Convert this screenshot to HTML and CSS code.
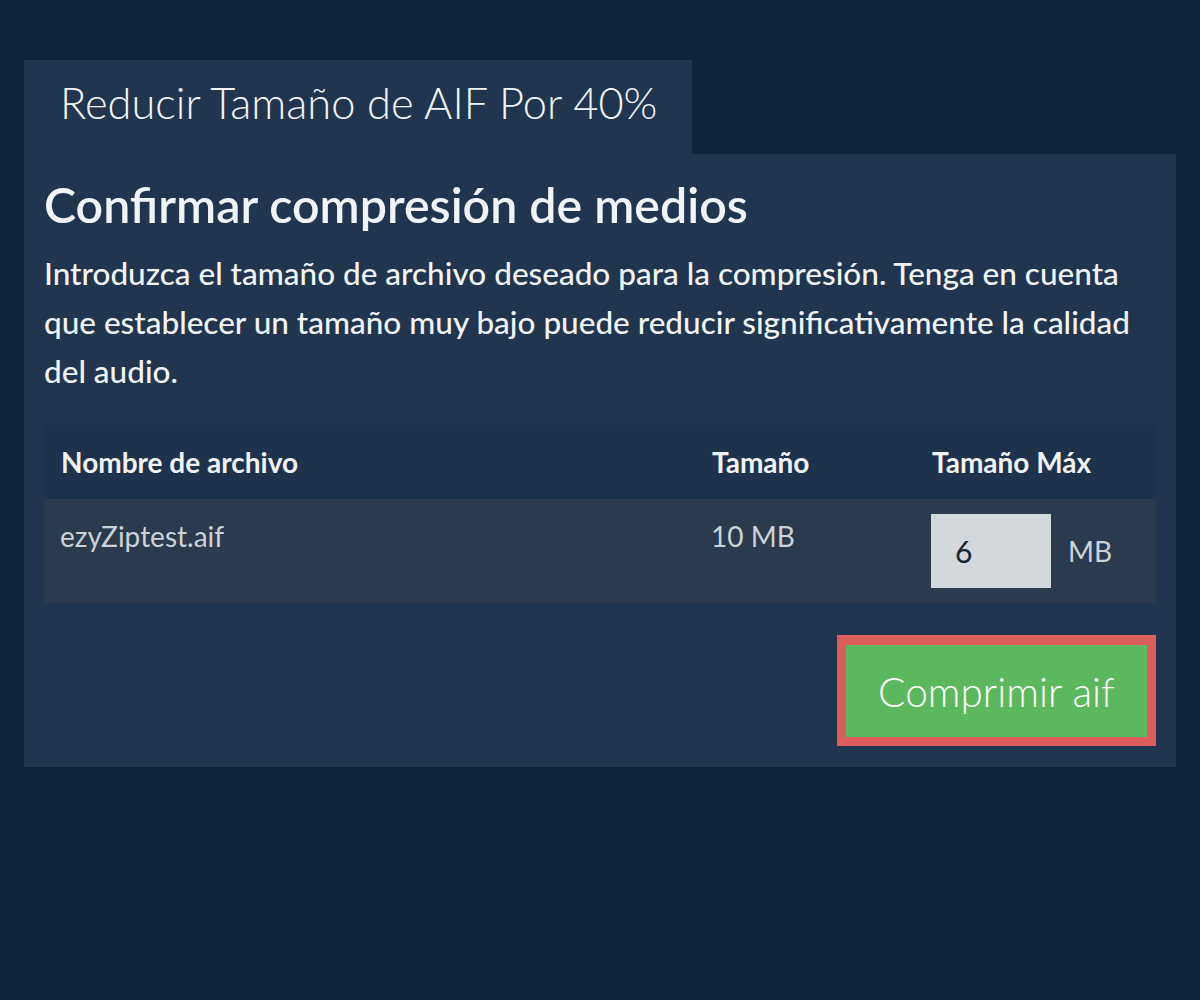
FILE: index.html
```html
<!DOCTYPE html>
<html lang="es">
<head>
<meta charset="utf-8">
<title>Reducir Tamaño de AIF Por 40%</title>
<link rel="stylesheet" href="styles.css">
</head>
<body>
<div class="wrap">
  <div class="tab">Reducir Tamaño de AIF Por 40%</div>
  <section class="panel">
    <h1 class="title">Confirmar compresión de medios</h1>
    <p class="desc">Introduzca el tamaño de archivo deseado para la compresión. Tenga en cuenta que establecer un tamaño muy bajo puede reducir significativamente la calidad del audio.</p>
    <table class="files">
      <colgroup>
        <col class="col-name">
        <col class="col-size">
        <col class="col-max">
      </colgroup>
      <thead>
        <tr>
          <th>Nombre de archivo</th>
          <th>Tamaño</th>
          <th>Tamaño Máx</th>
        </tr>
      </thead>
      <tbody>
        <tr>
          <td>ezyZiptest.aif</td>
          <td>10 MB</td>
          <td class="c-max"><div class="maxcell"><input class="num" type="text" value="6"><span class="unit">MB</span></div></td>
        </tr>
      </tbody>
    </table>
    <div class="actions">
      <button class="go">Comprimir aif</button>
    </div>
  </section>
</div>
</body>
</html>
```
FILE: styles.css
```css
html, body {
  margin: 0;
  padding: 0;
  background: #0f2339;
  font-family: Lato, "Open Sans", sans-serif;
  color: #f1f2f3;
}
.wrap {
  padding: 60px 24px;
}
.tab {
  display: inline-block;
  background: #21354f;
  height: 94px;
  line-height: 84px;
  padding: 0 35px 0 36px;
  font-size: 43.4px;
  font-weight: 300;
  color: #f3f4f5;
}
.panel {
  background: #21354f;
  padding: 20px 20px 21px;
}
.title {
  margin: 0;
  font-size: 48.3px;
  font-weight: 600;
  line-height: 60px;
  color: #f2f3f4;
}
.desc {
  margin: 15px 0 0;
  font-size: 31.5px;
  font-weight: 500;
  line-height: 49px;
  color: #f2f3f4;
}
.files {
  width: 100%;
  table-layout: fixed;
  border-collapse: collapse;
  margin-top: 29px;
}
.col-name { width: 651px; }
.col-size { width: 220px; }
.files th {
  background: #1f324b;
  height: 74px;
  text-align: left;
  font-size: 28px;
  font-weight: 700;
  padding: 0 0 0 17px;
  color: #f1f2f3;
}
.files td {
  background: #2b3a4c;
  height: 104px;
  vertical-align: top;
  padding: 20px 0 0 16px;
  font-size: 28px;
  line-height: 34px;
  color: #cdd2d7;
  box-sizing: border-box;
}
.files td.c-max { padding: 15px 0 0 16px; }
.maxcell {
  display: flex;
  align-items: center;
}
.num {
  width: 120px;
  height: 74px;
  box-sizing: border-box;
  border: 0;
  background: #d3d8dc;
  padding: 0 0 0 24px;
  font-family: Lato, sans-serif;
  font-size: 30px;
  color: #1a2533;
  outline: none;
}
.unit {
  margin-left: 17px;
  font-size: 28px;
  color: #cdd2d7;
}
.actions {
  display: flex;
  justify-content: flex-end;
  margin-top: 32px;
}
.go {
  background: #5cb85c;
  border: 9px solid #dc5e5c;
  border-top-width: 10px;
  color: #ffffff;
  font-family: Lato, sans-serif;
  font-size: 40.6px;
  font-weight: 300;
  width: 319px;
  height: 111px;
  padding: 0;
  cursor: pointer;
}
```
